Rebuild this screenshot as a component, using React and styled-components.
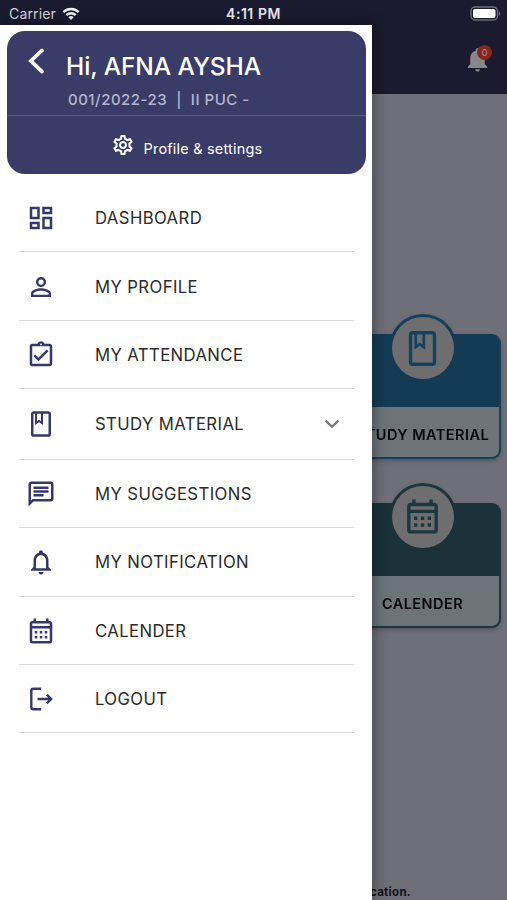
import React from 'react'
import styled, { createGlobalStyle } from 'styled-components'
import {
  MdOutlineDashboard,
  MdPersonOutline,
  MdOutlineAssignmentTurnedIn,
  MdOutlineChat,
  MdNotificationsNone,
  MdNotifications,
  MdOutlineCalendarMonth,
  MdOutlineSettings,
} from 'react-icons/md'

const GlobalStyle = createGlobalStyle`
  * {
    box-sizing: border-box;
  }

  body {
    margin: 0;
    font-family: Inter, "Liberation Sans", sans-serif;
  }
`

const Screen = styled.div`
  position: relative;
  display: flex;
  flex-direction: column;
  width: 507px;
  height: 900px;
  overflow: hidden;
  background: #6f6f78;
`

const StatusBar = styled.header`
  display: grid;
  grid-template-columns: 1fr auto 1fr;
  align-items: center;
  flex: none;
  height: 25px;
  padding: 2px 6px 0 9px;
  background: #1b1b2f;
  color: #e9e9ee;
  font-size: 14px;
  line-height: 20px;
`

const Carrier = styled.div`
  display: flex;
  align-items: center;
  gap: 6px;
  color: #d6d6dc;
  letter-spacing: 0.15px;
`

const Clock = styled.div`
  margin-right: 3px;
  font-size: 14px;
  font-weight: 600;
  letter-spacing: 0.55px;
`

const BatterySlot = styled.div`
  display: flex;
  justify-content: flex-end;
`

const TopBar = styled.div`
  display: flex;
  justify-content: flex-end;
  flex: none;
  height: 69px;
  padding: 20px 15px 0 0;
  background: #1b1b2f;
`

const BellButton = styled.div`
  position: relative;
  width: 29px;
  height: 29px;
  color: #87878a;
`

const Badge = styled.span`
  position: absolute;
  top: 0;
  right: 0;
  width: 15px;
  height: 15px;
  border-radius: 50%;
  background: #84281f;
  color: #b08a88;
  font-size: 9px;
  line-height: 15px;
  text-align: center;
`

const Page = styled.main`
  display: flex;
  flex: 1;
  flex-direction: column;
  align-items: flex-end;
  justify-content: space-between;
  padding: 220px 6px 0 0;
`

const Cards = styled.div`
  display: flex;
  flex-direction: column;
  gap: 23.5px;
`

const Card = styled.div`
  display: flex;
  flex-direction: column;
  align-items: center;
  width: 157px;
  height: 145px;
  padding-top: 20px;
  filter: drop-shadow(0 2px 2px rgba(0, 0, 0, 0.22));
`

const CardBox = styled.div`
  display: flex;
  flex-direction: column;
  width: 100%;
  height: 125px;
  border: 2px solid ${(props) => props.$accent};
  border-top-color: ${(props) => props.$fill};
  border-radius: 9px;
  background: ${(props) => props.$fill};
  overflow: hidden;
`

const CardTop = styled.div`
  height: 71px;
`

const Circle = styled.div`
  display: flex;
  align-items: center;
  justify-content: center;
  flex: none;
  width: 68px;
  height: 68px;
  margin-top: -20px;
  margin-bottom: -48px;
  z-index: 1;
  border: 3px solid ${(props) => props.$fill};
  border-top-color: ${(props) => props.$accent};
  border-radius: 50%;
  background: #6e6e6e;
  color: ${(props) => props.$accent};
`

const CardLabel = styled.div`
  flex: 1;
  padding-top: 17px;
  border-radius: 0 0 6px 6px;
  background: #6c7477;
  color: #07070a;
  font-size: 14.5px;
  font-weight: 600;
  line-height: 22px;
  letter-spacing: 0.45px;
  text-align: center;
  white-space: nowrap;
`

const FooterNote = styled.p`
  margin: 0 90px 0 0;
  color: #111114;
  font-size: 11.5px;
  font-weight: 700;
  line-height: 15px;
  letter-spacing: 0.3px;
`

const Drawer = styled.aside`
  position: absolute;
  top: 25px;
  left: 0;
  bottom: 0;
  width: 372px;
  padding: 6px 6px 0 7px;
  background: #fff;
  box-shadow: 0 0 14px rgba(0, 0, 0, 0.45);
`

const ProfileCard = styled.section`
  height: 143px;
  border-radius: 18px;
  background: #3a3c68;
  color: #fff;
`

const ProfileTop = styled.div`
  display: flex;
  height: 85px;
  padding: 17px 0 0 21px;
  border-bottom: 1.5px solid #585a84;
`

const ProfileText = styled.div`
  padding-left: 21px;
`

const Name = styled.h1`
  margin: 2px 0 0;
  font-size: 24.5px;
  font-weight: 500;
  line-height: 32px;
  letter-spacing: -0.1px;
  white-space: nowrap;
`

const ClassInfo = styled.div`
  padding: 8px 0 0 2px;
  color: #b5b6cc;
  font-size: 15px;
  font-weight: 500;
  line-height: 20px;
  letter-spacing: 0.5px;
  white-space: pre;
`

const SettingsLink = styled.div`
  display: flex;
  align-items: center;
  justify-content: center;
  gap: 9px;
  height: 58px;
  font-size: 14.5px;
  line-height: 20px;
  letter-spacing: 0.2px;

  span {
    padding-top: 8px;
  }
`

const Menu = styled.nav`
  display: flex;
  flex-direction: column;
  padding: 10px 12px 0;
`

const MenuItem = styled.div`
  display: flex;
  align-items: center;
  height: ${(props) => (props.$expandable ? '70.6px' : '68.4px')};
  padding: 1px 14px 0 7px;
  border-bottom: 1.5px solid #d9d9d9;
  color: #2a2a2a;
  font-size: 16.7px;
  letter-spacing: 0.4px;

  > svg:first-child {
    flex: none;
    color: #36386c;
  }
`

const MenuLabel = styled.span`
  flex: 1;
  padding-left: 39px;
  white-space: nowrap;
`

const WifiIcon = () => (
  <svg width="18" height="14" viewBox="0 0 20 15" fill="none" stroke="#f1f1f4" strokeWidth="2.6">
    <path d="M1.5 5.4a12.2 12.2 0 0 1 17 0" />
    <path d="M4.8 8.8a7.5 7.5 0 0 1 10.4 0" />
    <path d="M10 14.2L7 11.2a4.3 4.3 0 0 1 6 0z" fill="#f1f1f4" stroke="none" />
  </svg>
)

const BatteryIcon = () => (
  <svg width="31" height="15" viewBox="0 0 31 15">
    <rect x="1" y="1" width="26.5" height="13" rx="4" fill="none" stroke="#6d6d7a" strokeWidth="1.4" />
    <rect x="3" y="3" width="22.5" height="9" rx="2" fill="#fff" />
    <path d="M29 5.2c1.7.9 1.7 3.7 0 4.6z" fill="#6d6d7a" />
  </svg>
)

const BackIcon = () => (
  <svg width="17" height="26" viewBox="0 0 17 26" fill="none" stroke="#fff" strokeWidth="3.6" strokeLinecap="round">
    <path d="M14 2.4L2.8 12.9 14 23.6" />
  </svg>
)

const BookIcon = ({ size }) => (
  <svg width={size} height={size} viewBox="0 0 24 24" fill="none" stroke="currentColor" strokeWidth="2">
    <rect x="5" y="2.8" width="14" height="18.4" rx="1.3" />
    <path d="M8 3v8.2l2.4-1.7 2.4 1.7V3" strokeWidth="1.6" />
  </svg>
)

const LogoutIcon = ({ size }) => (
  <svg width={size} height={size} viewBox="0 0 30 30" fill="none" stroke="currentColor" strokeWidth="2.4">
    <path d="M15.2 4.7H7.3a2 2 0 0 0-2 2v16.6a2 2 0 0 0 2 2h7.9" />
    <path d="M11.5 15H25M20.8 10.7l4.3 4.3-4.3 4.3" />
  </svg>
)

const ChevronIcon = () => (
  <svg width="16" height="10" viewBox="0 0 16 10" fill="none" stroke="#757575" strokeWidth="2.2">
    <path d="M1.6 1.6L8 7.8l6.4-6.2" />
  </svg>
)

const items = [
  { label: 'DASHBOARD', Icon: MdOutlineDashboard },
  { label: 'MY PROFILE', Icon: MdPersonOutline },
  { label: 'MY ATTENDANCE', Icon: MdOutlineAssignmentTurnedIn },
  { label: 'STUDY MATERIAL', Icon: BookIcon, expandable: true },
  { label: 'MY SUGGESTIONS', Icon: MdOutlineChat },
  { label: 'MY NOTIFICATION', Icon: MdNotificationsNone },
  { label: 'CALENDER', Icon: MdOutlineCalendarMonth },
  { label: 'LOGOUT', Icon: LogoutIcon },
]

const cards = [
  { label: 'STUDY MATERIAL', Icon: BookIcon, fill: '#133b54', accent: '#15425f' },
  { label: 'CALENDER', Icon: MdOutlineCalendarMonth, fill: '#1b323a', accent: '#1c383f' },
]

export default function App() {
  return (
    <>
      <GlobalStyle />
      <Screen>
        <StatusBar>
          <Carrier>
            Carrier
            <WifiIcon />
          </Carrier>
          <Clock>4:11 PM</Clock>
          <BatterySlot>
            <BatteryIcon />
          </BatterySlot>
        </StatusBar>
        <TopBar>
          <BellButton>
            <MdNotifications size={29} />
            <Badge>0</Badge>
          </BellButton>
        </TopBar>
        <Page>
          <Cards>
            {cards.map(({ label, Icon, fill, accent }) => (
              <Card key={label}>
                <Circle $fill={fill} $accent={accent}>
                  <Icon size={41} />
                </Circle>
                <CardBox $fill={fill} $accent={accent}>
                  <CardTop />
                  <CardLabel>{label}</CardLabel>
                </CardBox>
              </Card>
            ))}
          </Cards>
          <FooterNote>cation.</FooterNote>
        </Page>

        <Drawer>
          <ProfileCard>
            <ProfileTop>
              <BackIcon />
              <ProfileText>
                <Name>Hi, AFNA AYSHA</Name>
                <ClassInfo>001/2022-23  |  II PUC -</ClassInfo>
              </ProfileText>
            </ProfileTop>
            <SettingsLink>
              <MdOutlineSettings size={24} />
              <span>Profile &amp; settings</span>
            </SettingsLink>
          </ProfileCard>
          <Menu>
            {items.map(({ label, Icon, expandable }) => (
              <MenuItem key={label} $expandable={expandable}>
                <Icon size={30} />
                <MenuLabel>{label}</MenuLabel>
                {expandable && <ChevronIcon />}
              </MenuItem>
            ))}
          </Menu>
        </Drawer>
      </Screen>
    </>
  )
}
